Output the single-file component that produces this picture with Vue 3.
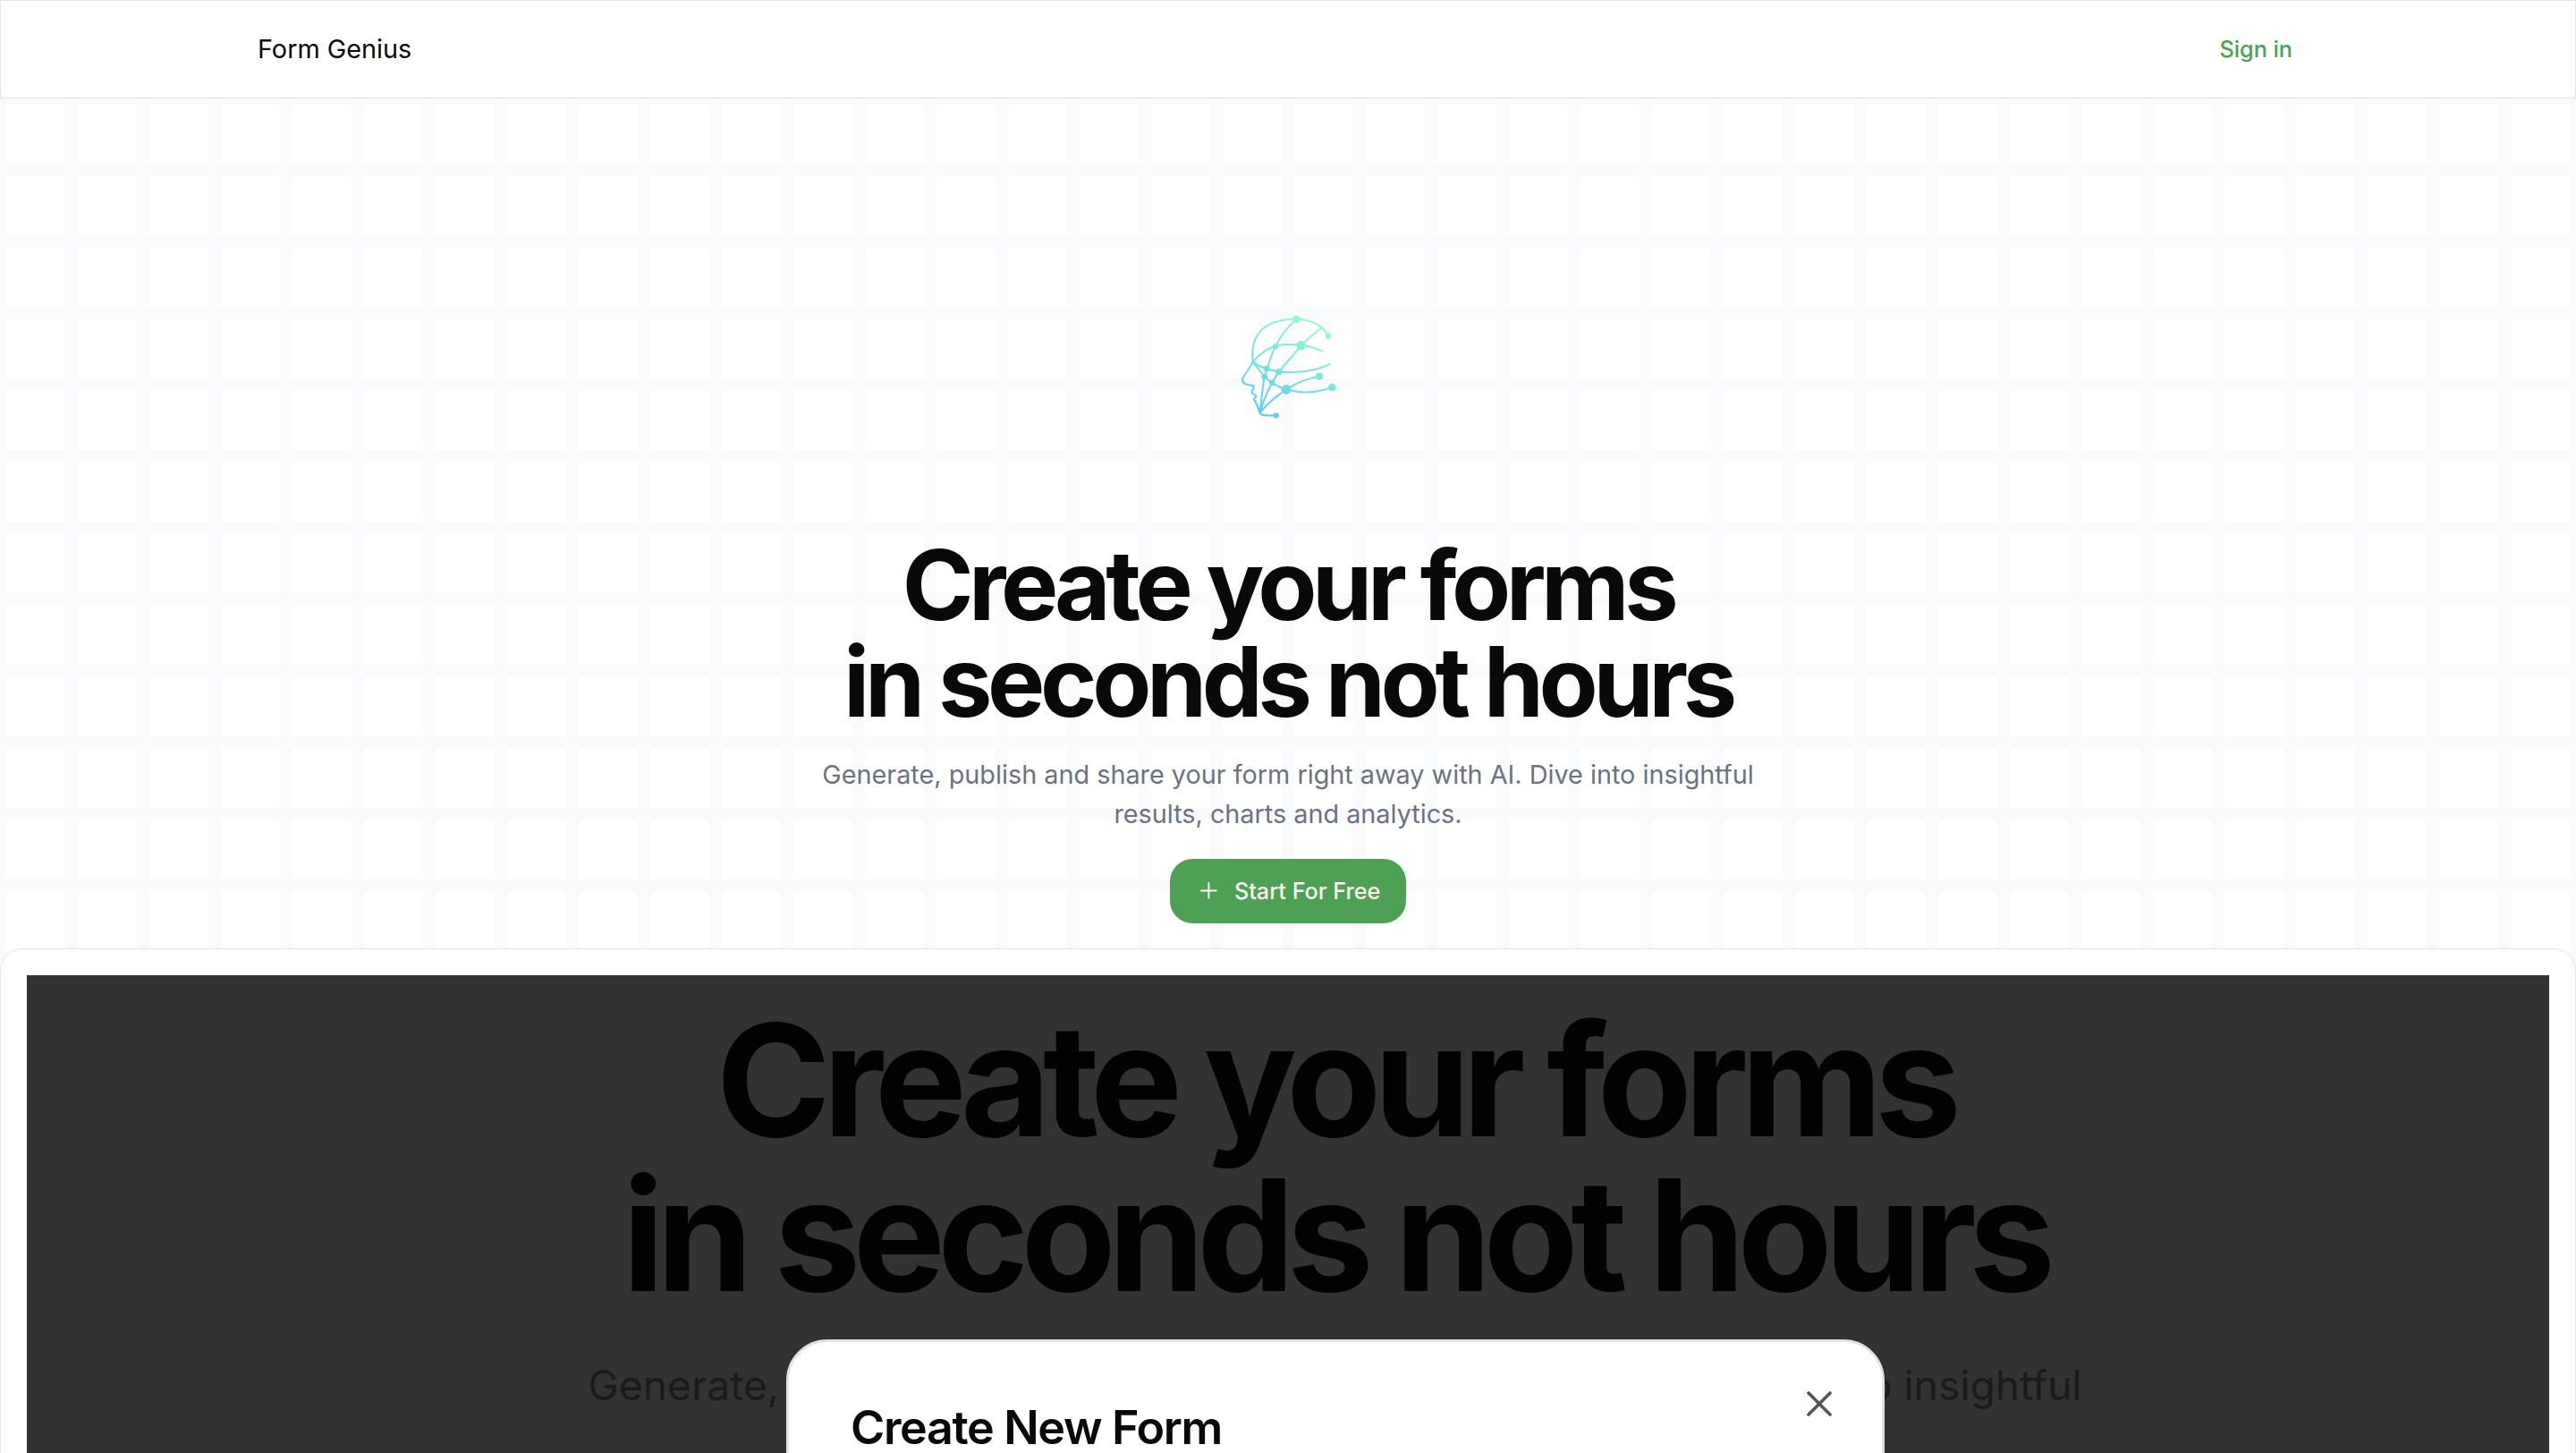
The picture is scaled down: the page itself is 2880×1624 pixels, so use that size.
<script setup>
const nodes = [
  [238, 50, 12], [345, 107, 9.5], [254, 138, 15.5], [168, 142, 9.5], [138, 216, 10],
  [179, 227, 11], [131, 243, 10], [157, 264, 9.5], [315, 242, 12], [204, 286, 16],
  [358, 279, 13], [170, 373, 9.5],
]
</script>

<template>
  <div class="page">
    <header class="nav">
      <div class="nav-inner">
        <h1 class="brand">Form Genius</h1>
        <a class="signin">Sign in</a>
      </div>
    </header>

    <main class="hero">
      <svg class="logo" viewBox="0 0 420 420" fill="none">
        <defs>
          <linearGradient id="mind" gradientUnits="userSpaceOnUse" x1="115" y1="370" x2="295" y2="86">
            <stop offset="0" stop-color="#5cc8f7" />
            <stop offset="1" stop-color="#90facd" />
          </linearGradient>
        </defs>
        <g stroke="url(#mind)" stroke-width="6" stroke-linecap="round" stroke-linejoin="round">
          <path d="M92 193C83 110 120 50 238 50C285 51 328 70 345 107" />
          <path d="M92 193C82 216 64 235 56 252C56 270 78 272 95 273C98 285 87 290 89 297C94 304 102 302 103 308C101 315 95 314 96 319C104 331 110 345 115 363" />
          <path d="M115 363C119 376 137 373 170 373" />
          <path d="M238 50C195 90 180 115 168 142C150 175 135 240 131 243C124 285 120 325 116 363" />
          <path d="M320 81C285 108 255 135 241 154L179 227C155 262 130 315 116 363" />
          <path d="M92 193C128 153 160 134 215 135C265 135 290 144 326 157" />
          <path d="M92 193C112 209 125 213 138 216C175 230 265 240 351 201" />
          <path d="M92 193L131 243C150 261 175 277 204 286C260 301 305 297 358 279" />
          <path d="M116 363C135 340 165 312 204 286C240 263 275 248 315 242" />
        </g>
        <circle v-for="([x, y, r], i) in nodes" :key="i" :cx="x" :cy="y" :r="r" fill="url(#mind)" />
      </svg>

      <h2 class="headline">Create your forms<br />in seconds not hours</h2>
      <p class="lead">Generate, publish and share your form right away with AI. Dive into insightful<br />results, charts and analytics.</p>
      <button class="cta">
        <svg class="plus" viewBox="0 0 24 24" fill="none" stroke="currentColor" stroke-width="1.7" stroke-linecap="round">
          <path d="M5 12h14M12 5v14" />
        </svg>
        Start For Free
      </button>
    </main>

    <section class="preview">
      <div class="screen">
        <div class="screen-copy">
          <h2 class="screen-title">Create your forms<br />in seconds not hours</h2>
          <p class="screen-lead">Generate, publish and share your form right away with AI. Dive into insightful</p>
        </div>
        <div class="dialog">
          <h3 class="dialog-title">Create New Form</h3>
          <svg class="close" viewBox="0 0 28 28" fill="none" stroke="#555557" stroke-width="3.6" stroke-linecap="round">
            <path d="M2 2l24 24M26 2L2 26" />
          </svg>
        </div>
      </div>
    </section>
  </div>
</template>

<style>
body {
  margin: 0;
  overflow: hidden;
}
</style>

<style scoped>
.page {
  display: flex;
  flex-direction: column;
  height: 1624px;
  overflow: hidden;
  font-family: Inter, "Liberation Sans", sans-serif;
  color: #09090b;
  background-color: #fff;
  background-image:
    linear-gradient(90deg, #f9fafc 6.67px, transparent 6.67px, transparent 73.33px, #f9fafc 73.33px),
    linear-gradient(#f9fafc 6.67px, #fff 6.67px, #fff 73.33px, #f9fafc 73.33px);
  background-size: 80px 80px;
  background-position: 0 110px;
}
h1, h2, h3, p {
  margin: 0;
}
.nav {
  flex: none;
  box-sizing: border-box;
  height: 110px;
  border: 1px solid #e4e4e7;
  background: #fff;
}
.nav-inner {
  display: flex;
  align-items: center;
  justify-content: space-between;
  height: 108px;
  padding: 0 316px 0 287px;
}
.brand {
  font-size: 28.8px;
  font-weight: 400;
  line-height: 44px;
}
.signin {
  font-size: 25.2px;
  font-weight: 500;
  line-height: 36px;
  color: #4ea154;
}
.hero {
  flex: none;
  box-sizing: border-box;
  height: 950px;
  padding-top: 230px;
  display: flex;
  flex-direction: column;
  align-items: center;
  text-align: center;
}
.logo {
  flex: none;
  width: 140px;
  height: 140px;
}
.headline {
  margin-top: 119.5px;
  font-size: 108px;
  font-weight: 700;
  line-height: 108px;
  letter-spacing: -0.05em;
  white-space: nowrap;
}
.lead {
  margin-top: 28px;
  font-size: 28.8px;
  line-height: 44px;
  color: #6b7280;
  white-space: nowrap;
}
.cta {
  display: flex;
  align-items: center;
  gap: 14.4px;
  box-sizing: border-box;
  height: 72px;
  margin-top: 28px;
  padding: 0 28.8px;
  border: 0;
  border-radius: 25.2px;
  background: #4ea154;
  color: #fff1f2;
  font: 500 25.2px/36px Inter, "Liberation Sans", sans-serif;
  white-space: nowrap;
}
.plus {
  width: 28.8px;
  height: 28.8px;
}
.preview {
  flex: none;
  box-sizing: border-box;
  height: 700px;
  padding: 29px;
  border: 1px solid #e4e4e7;
  border-radius: 25.2px;
  background: #fff;
}
.screen {
  position: relative;
  height: 640px;
  overflow: hidden;
  background: #323232;
}
.screen-copy {
  padding: 31px 0 0 105px;
  text-align: center;
  white-space: nowrap;
}
.screen-title {
  font-size: 173.2px;
  font-weight: 700;
  line-height: 173.2px;
  letter-spacing: -0.05em;
  color: #020202;
}
.screen-lead {
  margin-top: 46px;
  font-size: 46.2px;
  line-height: 70px;
  color: #1b1b1c;
}
.dialog {
  position: absolute;
  left: 849px;
  top: 407px;
  box-sizing: border-box;
  width: 1228px;
  height: 600px;
  padding: 59px 56px 0 69px;
  display: flex;
  align-items: flex-start;
  justify-content: space-between;
  border: 3px solid #e2e2e3;
  border-radius: 46px;
  background: #fff;
}
.dialog-title {
  margin-top: 11px;
  font-size: 52px;
  font-weight: 620;
  line-height: 52px;
  letter-spacing: -0.026em;
  white-space: nowrap;
}
.close {
  flex: none;
  width: 28px;
  height: 28px;
  margin-top: -4px;
}
</style>
